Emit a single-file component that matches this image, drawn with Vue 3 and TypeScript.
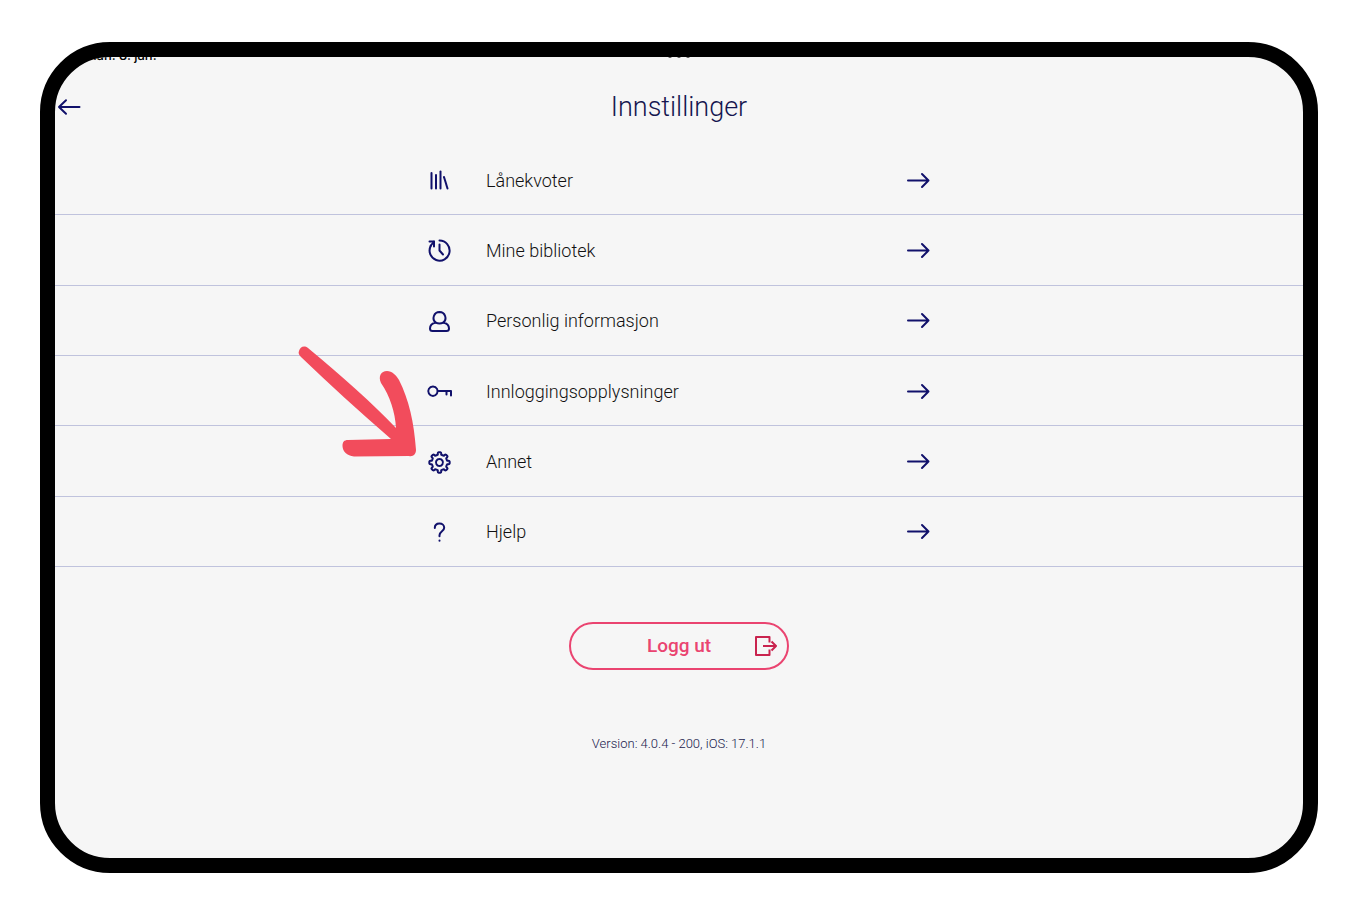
<script setup lang="ts">
interface SettingsItem {
  id: string
  label: string
  paths: string[]
}

function gearOutline(cx: number, cy: number, teeth: number, outer: number, inner: number): string {
  const at = (radius: number, degrees: number): string => {
    const a = (degrees * Math.PI) / 180
    return `${(cx + radius * Math.sin(a)).toFixed(2)} ${(cy - radius * Math.cos(a)).toFixed(2)}`
  }
  const step = 360 / teeth
  let d = `M${at(inner, -12)}`
  for (let i = 0; i < teeth; i++) {
    const a = i * step
    d += `L${at(outer - 1, a - 11)}Q${at(outer, a - 10)} ${at(outer, a - 5)}L${at(outer, a + 5)}`
    d += `Q${at(outer, a + 10)} ${at(outer - 1, a + 11)}L${at(inner, a + 12)}`
    d += `Q${at(inner - 0.5, a + step / 2)} ${at(inner, a + step - 12)}`
  }
  return d + 'Z'
}

const items: SettingsItem[] = [
  {
    id: 'quota',
    label: 'Lånekvoter',
    paths: ['M4.500 5V20.500', 'M9 7V20.500', 'M13.500 3.500V20.500', 'M17 9L20.500 20.500'],
  },
  {
    id: 'libraries',
    label: 'Mine bibliotek',
    paths: ['M12.500 2.600A10 10 0 1 1 4 7.500', 'M2.500 3.500H7V8.500', 'M7 3.500L3.500 8', 'M12.500 6.500V12.500L16 16.500'],
  },
  {
    id: 'personal',
    label: 'Personlig informasjon',
    paths: [
      'M12.500 3A6 6 0 0 1 16.300 13.600C20 14.400 22 16.500 22 19.500C22 21.200 21.200 22 19.500 22H5.500C3.800 22 3 21.200 3 19.500C3 16.500 5 14.400 8.700 13.600A6 6 0 0 1 12.500 3Z',
      'M8.700 13.600Q12.500 15.400 16.300 13.600',
    ],
  },
  {
    id: 'login',
    label: 'Innloggingsopplysninger',
    paths: ['M6 7.500A4.700 4.700 0 1 1 5.900 7.500Z', 'M10.700 12H24V16.500', 'M19.500 12V15.500'],
  },
  {
    id: 'other',
    label: 'Annet',
    paths: [gearOutline(12.5, 13.5, 8, 10.2, 8), 'M12.500 10A3.500 3.500 0 1 1 12.400 10Z'],
  },
  {
    id: 'help',
    label: 'Hjelp',
    paths: ['M7.800 8C7.800 5.200 9.800 3.500 12.500 3.500C15.200 3.500 17.200 5.200 17.200 7.700C17.200 11.300 12.500 11.200 12.500 15.300V16.200', 'M12.500 20.600V20.700'],
  },
]
</script>

<template>
  <div class="page">
    <div class="device">
      <div class="status">
        <span class="date">man. 8. jan.</span>
        <span class="dots"><i></i><i></i><i></i></span>
      </div>
      <header class="header">
        <button class="back" type="button" aria-label="Tilbake">
          <svg width="26" height="20" viewBox="0 0 26 20" class="line"><path d="M24.500 10H4M11 3.200L4 10L11 16.800" /></svg>
        </button>
        <h1>Innstillinger</h1>
      </header>

      <main>
        <nav class="list">
          <a v-for="item in items" :key="item.id" class="row" :href="'#' + item.id">
            <span class="inner">
              <svg class="icon line" width="25" height="25" viewBox="0 0 25 25">
                <path v-for="d in item.paths" :key="d" :d="d" />
              </svg>
              <span class="label">{{ item.label }}</span>
              <svg class="line" width="25" height="20" viewBox="0 0 25 20"><path d="M2 9.500H22.500M16 3L22.500 9.500L16 16" /></svg>
            </span>
          </a>
          <svg class="pointer" width="120" height="112" viewBox="0 0 120 112" aria-hidden="true">
            <path
              d="M1 5C2 1 6 -1 10 2C45 31 74 57 98 82C97 66 92 50 83 37C80 30 83 25 89 25C94 25 98 29 101 34C111 54 116 76 118 104C118 108 115 111 111 110L56 110.500C49 110 44.500 105 44.500 100C44.500 96 46 94 50 94L93 93C61 65 31 38 3 11C1 9 0 7 1 5Z"
            />
          </svg>
        </nav>

        <button class="logout" type="button">
          <span>Logg ut</span>
          <svg width="24" height="22" viewBox="0 0 24 22"><path d="M15.500 7.500V2H2V20H15.500V14.500M9 11H22M17.500 6.500L22 11L17.500 15.500" /></svg>
        </button>
        <p class="version">Version: 4.0.4 - 200, iOS: 17.1.1</p>
      </main>
    </div>
  </div>
</template>

<style>
body {
  margin: 0;
  background: #fff;
}
</style>

<style scoped>
.page {
  box-sizing: border-box;
  min-height: 100vh;
  padding: 42px 40px 43px;
  display: flex;
  font-family: Roboto, "Liberation Sans", sans-serif;
}
.device {
  flex: 1;
  border: 15px solid #000;
  border-radius: 70px;
  background: #f6f6f6;
  overflow: hidden;
}
.status {
  display: grid;
  grid-template-columns: 1fr auto 1fr;
  grid-template-rows: 8px;
  align-items: end;
  padding-left: 30px;
}
.date {
  font: 500 13px/20px Inter, sans-serif;
  color: #000;
}
.dots {
  display: flex;
  gap: 5px;
  padding-bottom: 7px;
  margin-right: 30px;
}
.dots i {
  width: 4px;
  height: 4px;
  border-radius: 50%;
  background: #555;
}
.header {
  box-sizing: border-box;
  display: grid;
  grid-template-columns: 40px 1fr 40px;
  align-items: center;
  height: 80px;
  padding-top: 4px;
}
.back {
  display: flex;
  padding: 4px 0;
  border: 0;
  background: none;
  cursor: pointer;
}
h1 {
  margin: 0;
  text-align: center;
  font-size: 27px;
  line-height: 32px;
  font-weight: 300;
  color: #15154f;
}
.line {
  fill: none;
  stroke: #11116b;
  stroke-width: 2;
  stroke-linecap: round;
  stroke-linejoin: round;
}
.icon {
  overflow: visible;
}
main {
  display: flex;
  flex-direction: column;
  align-items: center;
}
.list {
  position: relative;
  align-self: stretch;
  display: grid;
  grid-auto-rows: 1fr;
  min-height: 422px;
}
.row {
  display: flex;
  justify-content: center;
  padding-top: 2px;
  border-bottom: 1px solid #c0c3dd;
  text-decoration: none;
  color: #111;
}
.inner {
  width: 504px;
  display: flex;
  align-items: center;
}
.label {
  flex: 1;
  margin-left: 34px;
  font-size: 18px;
  line-height: 24px;
  font-weight: 300;
}
.pointer {
  position: absolute;
  top: 201px;
  left: calc(50% - 381px);
  fill: #f24c5c;
  overflow: visible;
  pointer-events: none;
}
.logout {
  display: grid;
  grid-template-columns: 24px 1fr 24px;
  align-items: center;
  width: 220px;
  height: 48px;
  margin-top: 55px;
  padding: 0 9px;
  border: 2px solid #ea4470;
  border-radius: 24px;
  background: none;
  font: 500 19px/24px Roboto, sans-serif;
  color: #ea4470;
  cursor: pointer;
}
.logout span {
  grid-column: 2;
}
.logout svg {
  fill: none;
  stroke: #c9234e;
  stroke-width: 2;
  stroke-linejoin: round;
}
.version {
  margin: 64px 0 0;
  font-size: 13px;
  line-height: 20px;
  font-weight: 300;
  color: #20204c;
}
</style>
